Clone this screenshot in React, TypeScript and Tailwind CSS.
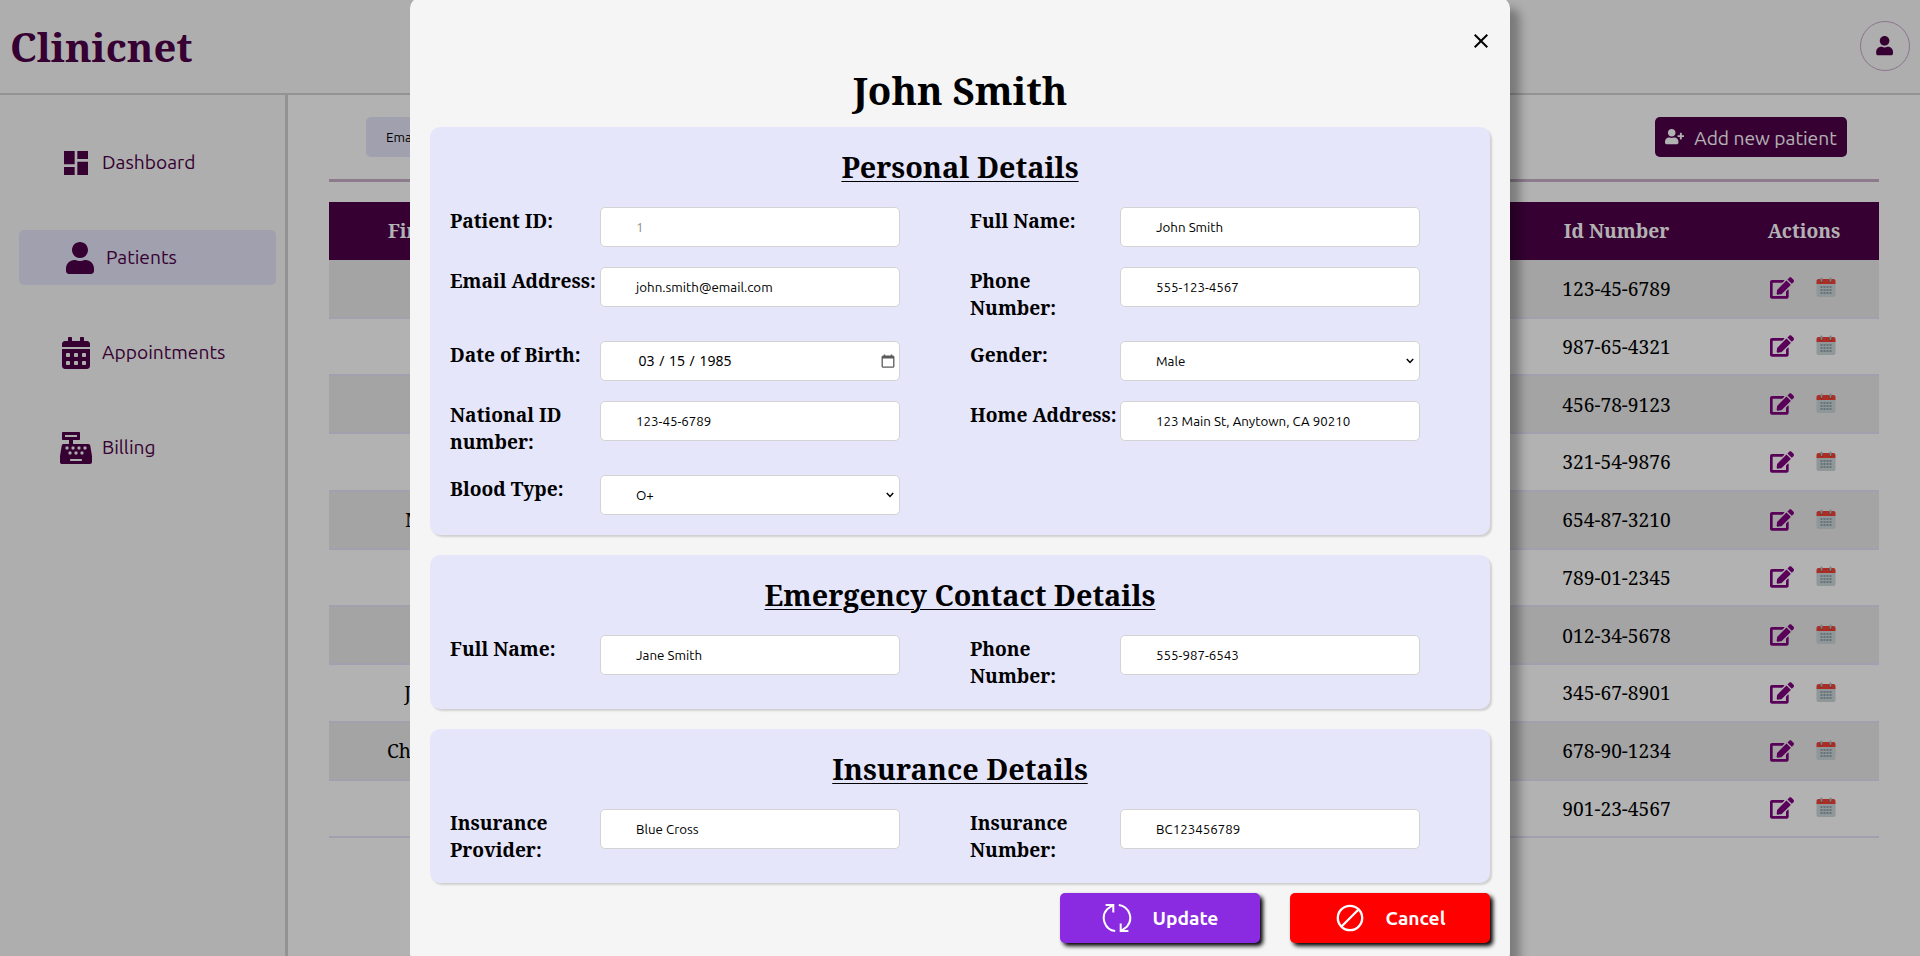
import type { ReactNode } from "react";
import { MdClose, MdDashboard } from "react-icons/md";
import {
  FaUser,
  FaCalendarAlt,
  FaCashRegister,
  FaUserPlus,
  FaEdit,
} from "react-icons/fa";
import { FcCalendar } from "react-icons/fc";

const rows = [
  { name: "", id: "123-45-6789" },
  { name: "", id: "987-65-4321" },
  { name: "", id: "456-78-9123" },
  { name: "", id: "321-54-9876" },
  { name: "Michael", id: "654-87-3210" },
  { name: "", id: "789-01-2345" },
  { name: "", id: "012-34-5678" },
  { name: "Jennifer", id: "345-67-8901" },
  { name: "Christopher", id: "678-90-1234" },
  { name: "", id: "901-23-4567" },
];

function NavItem({ icon, label, active }: { icon: ReactNode; label: string; active?: boolean }) {
  return (
    <a
      className={
        active
          ? "ml-[19px] flex h-[55px] w-[257px] items-center gap-[10px] rounded-[5px] bg-[#e6e6fa] pl-[45px]"
          : "ml-[19px] flex h-[55px] w-[257px] items-center gap-[10px] pl-[41px]"
      }
    >
      <span className="flex w-8 justify-center text-[32px]">{icon}</span>
      <span>{label}</span>
    </a>
  );
}

function Chevron() {
  return (
    <svg width="8" height="6" viewBox="0 0 8 6" fill="none" stroke="#000" strokeWidth="1.5" className="mr-px">
      <path d="M0.8 1L4 4.4L7.2 1" />
    </svg>
  );
}

function CalendarGlyph() {
  return (
    <svg width="14" height="14" viewBox="0 0 14 14" fill="none">
      <rect x="1.2" y="2.2" width="11.6" height="11" rx="1" stroke="#5b5b5b" strokeWidth="1.3" />
      <path d="M1 2h12v2.4H1zM2.8 0.4h1.4v2H2.8zM9.8 0.4h1.4v2H9.8z" fill="#5b5b5b" />
    </svg>
  );
}

type FieldProps = {
  label: string;
  value: ReactNode;
  kind?: "text" | "select" | "date";
  disabled?: boolean;
};

function Field({ label, value, kind = "text", disabled }: FieldProps) {
  return (
    <div className="flex w-[520px] items-start">
      <div className="w-[150px] text-[19.2px] leading-[27px] font-bold">{label}</div>
      <div className="flex h-10 w-[300px] items-center justify-between rounded-[5px] border border-[#d3d3d3] bg-white pr-[4px] pl-[35px] font-[Ubuntu,sans-serif] text-[13.333px]">
        <span className={disabled ? "pt-[2px] text-[#8c8c8c]" : "pt-[2px] text-black"}>{value}</span>
        {kind === "select" && <Chevron />}
        {kind === "date" && <CalendarGlyph />}
      </div>
    </div>
  );
}

function Section({ title, children }: { title: string; children: ReactNode }) {
  return (
    <section className="flex flex-col gap-5 rounded-[10px] bg-[#e6e6fa] p-5 shadow-[2px_2px_2px_rgba(0,0,0,0.15)]">
      <h2 className="h-10 text-center text-[28.8px] leading-[39px] font-bold underline decoration-[1px] underline-offset-[3px]">
        {title}
      </h2>
      <div className="grid grid-cols-[520px_500px] gap-y-5">{children}</div>
    </section>
  );
}

function DateValue() {
  return (
    <span className="mb-[2px] ml-[2.5px] flex gap-[4.6px] font-['Noto_Sans',sans-serif] text-[14px] leading-5">
      <span>03</span>
      <span>/</span>
      <span>15</span>
      <span>/</span>
      <span>1985</span>
    </span>
  );
}

function PatientModal() {
  return (
    <div className="-mt-[2px] flex h-[965px] w-[1100px] shrink-0 flex-col rounded-[10px] bg-[#f5f5f5] px-5 shadow-[10px_10px_10px_rgba(0,0,0,0.3)]">
      <div className="mt-[31px] -mr-[3px] flex h-6 justify-end">
        <MdClose size={24} />
      </div>
      <h1 className="mt-[10px] h-[64px] text-center text-[38.4px] leading-[54px] font-bold">John Smith</h1>
      <div className="flex flex-col gap-5">
        <Section title="Personal Details">
          <Field label="Patient ID:" value="1" disabled />
          <Field label="Full Name:" value="John Smith" />
          <Field label="Email Address:" value="john.smith@email.com" />
          <Field label="Phone Number:" value="555-123-4567" />
          <Field label="Date of Birth:" value={<DateValue />} kind="date" />
          <Field label="Gender:" value="Male" kind="select" />
          <Field label="National ID number:" value="123-45-6789" />
          <Field label="Home Address:" value="123 Main St, Anytown, CA 90210" />
          <Field label="Blood Type:" value="O+" kind="select" />
        </Section>
        <Section title="Emergency Contact Details">
          <Field label="Full Name:" value="Jane Smith" />
          <Field label="Phone Number:" value="555-987-6543" />
        </Section>
        <Section title="Insurance Details">
          <Field label="Insurance Provider:" value="Blue Cross" />
          <Field label="Insurance Number:" value="BC123456789" />
        </Section>
      </div>
      <div className="mt-[10px] flex justify-end gap-[30px] font-[Ubuntu,sans-serif] text-[19.2px] font-semibold text-white">
        <button className="flex h-[50px] w-[200px] items-center justify-center gap-[21px] rounded-[5px] bg-[#8a2be2] shadow-[3px_3px_4px_#000]">
          <svg width="30" height="30" viewBox="0 0 30 30" fill="none" stroke="#fff" strokeWidth="2">
            <path d="M13.2 28.1A13.2 13.2 0 0 1 5.2 6.2L11 2M3.6 2h7.7v7.6" />
            <path d="M13.2 28.1A13.2 13.2 0 0 1 5.2 6.2L11 2M3.6 2h7.7v7.6" transform="rotate(180 15 15)" />
          </svg>
          Update
        </button>
        <button className="flex h-[50px] w-[200px] items-center justify-center gap-[21px] rounded-[5px] bg-[#ff0000] shadow-[3px_3px_4px_#000]">
          <svg width="30" height="30" viewBox="0 0 30 30" fill="none" stroke="#fff" strokeWidth="2.3">
            <circle cx="15" cy="15" r="12.2" />
            <path d="M6.5 23.5L23.5 6.5" />
          </svg>
          Cancel
        </button>
      </div>
    </div>
  );
}

export default function App() {
  return (
    <div className="relative flex h-[956px] w-[1920px] flex-col overflow-hidden bg-white font-['Noto_Serif',serif] text-black">
      <header className="flex h-[95px] shrink-0 items-center justify-between border-b-2 border-[#d3d3d3] bg-[#f9f9f9] pr-[10px] pb-px pl-[10px] text-[#4e0049]">
        <span className="pt-px text-[40px] font-bold">Clinicnet</span>
        <span className="flex h-[50px] w-[50px] items-center justify-center rounded-full border border-[#c8a8c8] text-[19.2px]">
          <FaUser />
        </span>
      </header>
      <div className="flex flex-1">
        <nav className="flex w-[288px] shrink-0 flex-col gap-10 border-r-[3px] border-[#d3d3d3] bg-[#f9f9f9] pt-10 font-[Ubuntu,sans-serif] text-[19.2px] text-[#4e0049]">
          <NavItem icon={<MdDashboard />} label="Dashboard" />
          <NavItem icon={<FaUser />} label="Patients" active />
          <NavItem icon={<FaCalendarAlt />} label="Appointments" />
          <NavItem icon={<FaCashRegister />} label="Billing" />
        </nav>
        <main className="ml-[41px] flex w-[1550px] flex-col">
          <div className="flex h-[87px] items-start justify-between border-b-[3px] border-[#c8b1cb] pt-[22px] pr-8 pl-[37px] font-[Ubuntu,sans-serif]">
            <div className="flex h-10 w-[200px] items-center rounded-[5px] bg-[#e6e6fa] px-5 pt-px text-[13.333px]">Email</div>
            <button className="flex h-10 w-[192px] items-center gap-[10px] rounded-[5px] bg-[#4e0049] pl-[10px] text-[19.2px] text-white">
              <FaUserPlus size={19.2} />
              <span className="pt-[2px]">Add new patient</span>
            </button>
          </div>
          <div className="mt-5 flex h-[58px] shrink-0 items-center bg-[#4e0049] text-[19.2px] font-bold text-white">
            <div className="w-[225px] pt-px text-center whitespace-nowrap">First Name</div>
            <div className="ml-auto w-[225px] pt-px text-center">Id Number</div>
            <div className="w-[150px] pt-px text-center">Actions</div>
          </div>
          {rows.map((r) => (
            <div
              key={r.id}
              className="flex h-[57.75px] shrink-0 items-center border-b-2 border-[#e6e6fa] text-[19.2px] [&:nth-child(3)]:h-[58.6px] [&:nth-child(odd)]:bg-[#ebebeb] [&:nth-child(even)]:bg-white"
            >
              <div className="w-[225px] pt-[1.5px] text-center">{r.name}</div>
              <div className="ml-auto w-[225px] pt-[1.5px] text-center">{r.id}</div>
              <div className="flex w-[150px] justify-center gap-5 text-[24px]">
                <FaEdit className="text-[#800080]" />
                <FcCalendar />
              </div>
            </div>
          ))}
        </main>
      </div>
      <div className="absolute inset-0 flex items-start justify-center bg-black/30">
        <PatientModal />
      </div>
    </div>
  );
}
